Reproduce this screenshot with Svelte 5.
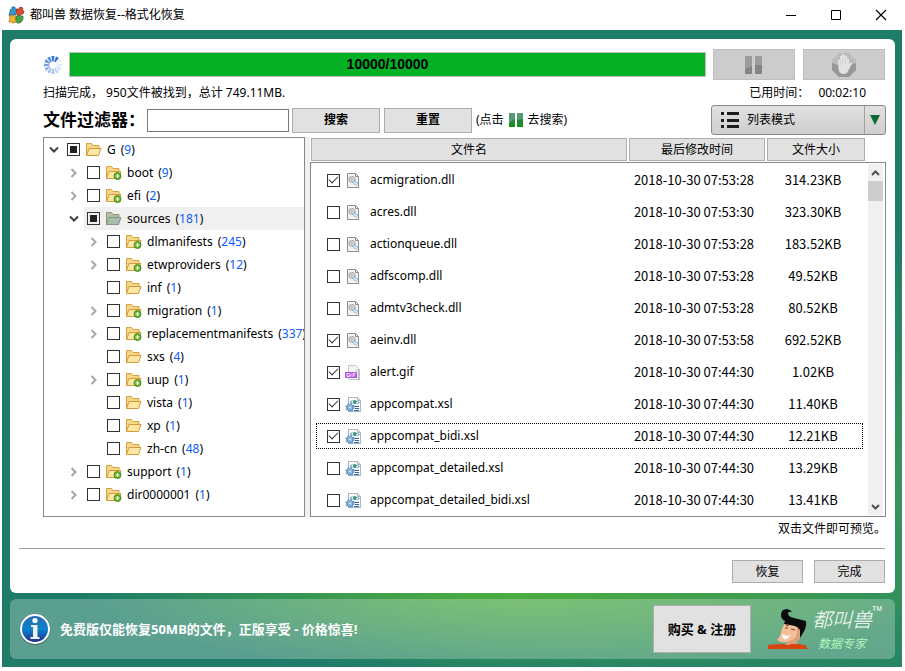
<script>
    let progress = 10000
    let total = 10000
    let keyword = ""
    let mode = "list"
    let selected = "sources"
    let focused = "appcompat_bidi.xsl"

    let tree = [
        {
            name: "G",
            count: 9,
            partial: true,
            children: [
                { name: "boot", count: 9, more: true },
                { name: "efi", count: 2, more: true },
                {
                    name: "sources",
                    count: 181,
                    partial: true,
                    children: [
                        { name: "dlmanifests", count: 245, more: true },
                        { name: "etwproviders", count: 12, more: true },
                        { name: "inf", count: 1 },
                        { name: "migration", count: 1, more: true },
                        { name: "replacementmanifests", count: 337, more: true },
                        { name: "sxs", count: 4 },
                        { name: "uup", count: 1, more: true },
                        { name: "vista", count: 1 },
                        { name: "xp", count: 1 },
                        { name: "zh-cn", count: 48 },
                    ],
                },
                { name: "support", count: 1, more: true },
                { name: "dir0000001", count: 1, more: true },
            ],
        },
    ]

    let files = [
        { name: "acmigration.dll", time: "2018-10-30 07:53:28", size: "314.23KB", checked: true },
        { name: "acres.dll", time: "2018-10-30 07:53:30", size: "323.30KB", checked: false },
        { name: "actionqueue.dll", time: "2018-10-30 07:53:28", size: "183.52KB", checked: false },
        { name: "adfscomp.dll", time: "2018-10-30 07:53:28", size: "49.52KB", checked: false },
        { name: "admtv3check.dll", time: "2018-10-30 07:53:28", size: "80.52KB", checked: false },
        { name: "aeinv.dll", time: "2018-10-30 07:53:58", size: "692.52KB", checked: true },
        { name: "alert.gif", time: "2018-10-30 07:44:30", size: "1.02KB", checked: true },
        { name: "appcompat.xsl", time: "2018-10-30 07:44:30", size: "11.40KB", checked: true },
        { name: "appcompat_bidi.xsl", time: "2018-10-30 07:44:30", size: "12.21KB", checked: true },
        { name: "appcompat_detailed.xsl", time: "2018-10-30 07:44:30", size: "13.29KB", checked: false },
        { name: "appcompat_detailed_bidi.xsl", time: "2018-10-30 07:44:30", size: "13.41KB", checked: false },
    ]

    // the spinner fades out anticlockwise, starting at one o'clock
    const spokes = [1, 0.1, 0.15, 0.2, 0.3, 0.4, 0.45, 0.55, 0.65, 0.75, 0.85, 0.95]
</script>

{#snippet folderIcon(node)}
    <svg width="17" height="16" viewBox="0 0 17 16">
        <path
            d="M1.5 13.5V1.5h5l1.5 2h6v3"
            fill={node.name === selected ? "#b4bd9d" : "#f6d68b"}
            stroke={node.name === selected ? "#8a9a7c" : "#d9a13c"}
        />
        <path
            d="M1.5 13.5L4 6.5h12l-2.500 7z"
            fill={node.name === selected ? "#a9bfae" : "#ffe7a3"}
            stroke={node.name === selected ? "#819882" : "#d39a3a"}
        />
        {#if node.more}
            <circle cx="12.500" cy="11" r="3.500" fill="#5fb022" stroke="#4c9318" />
            <path d="M10.500 11h4M12.500 9v4" stroke="#fff" stroke-width="1.200" />
        {/if}
    </svg>
{/snippet}

{#snippet fileIcon(name)}
    <svg width="17" height="17" viewBox="0 0 17 17">
        {#if name.endsWith(".dll")}
            <path d="M2.500 1.500h8l3 3v11h-11z" fill="#f4f4f4" stroke="#8d8d8d" />
            <path d="M10.500 1.500v3h3" fill="none" stroke="#8d8d8d" />
            <circle cx="7" cy="7.500" r="2.800" fill="none" stroke="#8b979c" stroke-width="1.600" stroke-dasharray="1.200 .6" />
            <circle cx="7" cy="7.500" r="1.300" fill="#a9b3b6" />
            <circle cx="10.500" cy="11.200" r="2" fill="#cfe6f4" stroke="#8db9d2" stroke-dasharray="1.200 .5" />
        {:else if name.endsWith(".gif")}
            <path d="M3.500 1.500h7l4 4v10h-11z" fill="#f4f4f4" stroke="#c4c4c4" />
            <path d="M10.500 1.500v4h4v10h-1.500v-9h-2.500z" fill="#bdbdbd" />
            <rect x="0" y="8" width="12" height="6" fill="#b458ea" />
            <path
                d="M4.500 9.500h-2.500v3h2.500v-1.500h-1M6 9.500v3M8 13v-3.500h2.500M8 11.200h2"
                fill="none"
                stroke="#fff"
                stroke-width=".8"
            />
        {:else}
            <path d="M3.500 1.500h9l3 3v11h-12z" fill="#fafcff" stroke="#adb3ba" />
            <path d="M12.500 1.500v3h3" fill="none" stroke="#adb3ba" />
            <path d="M7 4.500L5.500 6 7 7.500M12.500 5L14 6.500 12.500 8" fill="none" stroke="#3c61a8" />
            <circle cx="9.800" cy="6" r="2" fill="#2d9c84" />
            <path d="M9 10.500h5M10 12.500h4M9 14.500h5" stroke="#3a62ab" />
            <circle cx="5" cy="11.500" r="3" fill="#a4cdea" stroke="#5589b7" stroke-width="1.200" />
            <circle cx="5" cy="11.500" r="4" fill="none" stroke="#6b9bc4" stroke-width="1.400" stroke-dasharray="1.600 1.542" />
            <circle cx="5" cy="11.500" r="1.200" fill="#fff" stroke="#5589b7" stroke-width=".6" />
        {/if}
    </svg>
{/snippet}

{#snippet branch(nodes)}
    <ul>
        {#each nodes as node}
            <li>
                <div class="node">
                    {#if node.children || node.more}
                        <button class="toggle" aria-label={node.name} aria-expanded={!!node.children}>
                            <svg width="10" height="10" viewBox="0 0 10 10" fill="none" stroke-width="2">
                                {#if node.children}
                                    <path d="M1 2.500l4 4 4-4" stroke="#404040" />
                                {:else}
                                    <path d="M2.500 1l4 4-4 4" stroke="#a6a6a6" />
                                {/if}
                            </svg>
                        </button>
                    {:else}
                        <span class="toggle"></span>
                    {/if}
                    <label class:selected={node.name === selected}>
                        <input type="checkbox" indeterminate={node.partial} />
                        {@render folderIcon(node)}
                        <span>{node.name}</span>
                        <span class="count">(<span>{node.count}</span>)</span>
                    </label>
                </div>
                {#if node.children}
                    {@render branch(node.children)}
                {/if}
            </li>
        {/each}
    </ul>
{/snippet}

<header>
    <svg width="17" height="18" viewBox="0 0 17 18">
        <path d="M2 4l2-1 0-2 3 0 0 2 2 0v3l-1 1 0 2-3 0-1-1-1 2-2-1 1-3z" fill="#2e9bd0" stroke="#1b5c89" stroke-width=".7" />
        <path d="M9 3l2 0 1-2 3 1-1 2 2 1-1 3-2 0-1 2-3-1 0-2-1-1z" fill="#e24a2c" stroke="#902818" stroke-width=".7" />
        <path d="M1 9l3 1 2-1 2 3-1 2 1 2-3 1-2-1-2 0 1-4z" fill="#f5b62c" stroke="#a5700f" stroke-width=".7" />
        <path d="M8 10l2 0 1-1 2 1 2 0 0 3-1 2-2 2-3 0-1-3z" fill="#48a346" stroke="#2b6f2d" stroke-width=".7" />
    </svg>
    <h1>都叫兽 数据恢复--格式化恢复</h1>
    <button aria-label="最小化">
        <svg width="12" height="12" viewBox="0 0 12 12"><path d="M1 6.500h10" stroke="#000" /></svg>
    </button>
    <button aria-label="最大化">
        <svg width="12" height="12" viewBox="0 0 12 12"><path d="M1.500 1.500h9v9h-9z" fill="none" stroke="#000" /></svg>
    </button>
    <button aria-label="关闭">
        <svg width="12" height="12" viewBox="0 0 12 12"><path d="M1 1l10 10M11 1L1 11" stroke="#000" stroke-width="1.200" /></svg>
    </button>
</header>

<main>
    <div class="card">
        <div class="content">
            <div class="scan">
                <svg width="20" height="20" viewBox="0 0 20 20">
                    {#each spokes as opacity, i}
                        <path
                            d="M9.300 6.500L8.400 1h3.200l-.9 5.500z"
                            fill="#2f6fd6"
                            {opacity}
                            transform="rotate({i * 30 + 30} 10 10)"
                        />
                    {/each}
                </svg>
                <div class="progress" role="progressbar" aria-valuenow={progress} aria-valuemax={total}>
                    <div class="bar" style="width: {(progress / total) * 100}%"></div>
                    <span>{progress}/{total}</span>
                </div>
                <button class="control" disabled aria-label="暂停">
                    <svg width="18" height="20" viewBox="0 0 18 20">
                        <rect x="0" y="1" width="7" height="18" rx="1" fill="#9c9c9c" />
                        <rect x="10" y="1" width="7" height="18" rx="1" fill="#9c9c9c" />
                        <path d="M0 14q4-1 7-3v7q0 1-1 1H1q-1 0-1-1zM10 10l7 0v8q0 1-1 1h-5q-1 0-1-1z" fill="#848484" />
                    </svg>
                </button>
                <button class="control" disabled aria-label="停止">
                    <svg width="26" height="26" viewBox="0 0 26 26">
                        <path d="M8 1h10l7 7v10l-7 7H8l-7-7V8z" fill="#bdbdbd" />
                        <path d="M1 11q12 5 24 0v7l-7 7H8l-7-7z" fill="#989898" />
                        <path
                            d="M7 9q0-2 2-1V5q0-1.500 2-1V3q1-1.500 2.500 0v1q2-1 2.500 1v2q2-1 2 1l0 4q2-2 3-.5L17 19q-1 3-4 3-5 0-5.500-5z"
                            fill="#e2e2e2"
                        />
                        <path d="M9.500 8v5M12 5v7M14.500 6v6" stroke="#c9c9c9" stroke-width=".6" />
                    </svg>
                </button>
            </div>

            <div class="status">
                <span>扫描完成， 950文件被找到，总计 749.11MB.</span>
                <span class="elapsed">已用时间：</span>
                <span class="clock">00:02:10</span>
            </div>

            <div class="filter">
                <label for="keyword">文件过滤器：</label>
                <input id="keyword" type="text" bind:value={keyword} />
                <button>搜索</button>
                <button>重置</button>
                <span class="tip">
                    (点击
                    <svg width="14" height="16" viewBox="0 0 14 16">
                        <rect x="0" y="1" width="6" height="14" fill="#23843c" />
                        <rect x="8" y="1" width="6" height="14" fill="#23843c" />
                        <path d="M0 1h6v6l-6 4zM8 1h6v6l-6 1z" fill="#569c73" />
                        <path d="M0 12h6v3H0zM8 12h6v3H8z" fill="#17901c" />
                    </svg>
                    去搜索)
                </span>
                <div class="mode">
                    <svg width="18" height="18" viewBox="0 0 18 18" fill="#1c1c1c">
                        <path d="M0 1h3v3H0zM6 1h12v3H6zM0 8h3v3H0zM6 8h12v3H6zM0 14h3v3H0zM6 14h12v3H6z" />
                    </svg>
                    <select bind:value={mode} aria-label="列表模式">
                        <option value="list">列表模式</option>
                    </select>
                    <span class="arrow">
                        <svg width="10" height="10" viewBox="0 0 10 10"><path d="M0 0h10L5 10z" fill="#0b6b34" /></svg>
                    </span>
                </div>
            </div>

            <div class="panes">
                <nav>
                    {@render branch(tree)}
                </nav>
                <div class="files">
                    <table>
                        <thead>
                            <tr>
                                <th><button>文件名</button></th>
                                <th><button>最后修改时间</button></th>
                                <th><button>文件大小</button></th>
                            </tr>
                        </thead>
                        <tbody>
                            {#each files as file}
                                <tr class:focused={file.name === focused}>
                                    <td>
                                        <label>
                                            <input type="checkbox" bind:checked={file.checked} />
                                            {@render fileIcon(file.name)}
                                            {file.name}
                                        </label>
                                    </td>
                                    <td>{file.time}</td>
                                    <td>{file.size}</td>
                                </tr>
                            {/each}
                        </tbody>
                    </table>
                    <div class="scrollbar">
                        <svg width="15" height="17" viewBox="0 0 15 17"><path d="M4 11l3.500-3.500L11 11" fill="none" stroke="#505050" stroke-width="2" /></svg>
                        <div class="thumb"></div>
                        <svg width="15" height="17" viewBox="0 0 15 17"><path d="M4 7l3.500 3.500L11 7" fill="none" stroke="#505050" stroke-width="2" /></svg>
                    </div>
                </div>
            </div>
            <p>双击文件即可预览。</p>
        </div>

        <div class="actions">
            <button>恢复</button>
            <button>完成</button>
        </div>
    </div>

    <footer>
        <svg width="32" height="32" viewBox="0 0 32 32">
            <defs>
                <linearGradient id="info" x1="0" y1="0" x2="0" y2="1">
                    <stop offset="0" stop-color="#2a6cae" />
                    <stop offset=".5" stop-color="#0a83cc" />
                    <stop offset="1" stop-color="#1c2f86" />
                </linearGradient>
            </defs>
            <circle cx="16" cy="16.500" r="15.400" fill="#47706f" />
            <circle cx="16" cy="16" r="15" fill="#fff" />
            <circle cx="16" cy="16" r="13" fill="url(#info)" />
            <circle cx="16" cy="7.500" r="2.600" fill="#fff" />
            <path d="M12 12h6.500v12H20.500v2h-9v-2h2.500V14H12z" fill="#eef2f6" />
        </svg>
        <strong>免费版仅能恢复50MB的文件，正版享受 - 价格惊喜!</strong>
        <button>购买 &amp; 注册</button>
        <div class="brand">
            <svg width="40" height="42" viewBox="0 0 40 42">
                <path d="M17 14q-4 9-5 14l-3 4q4 3 9 2v5h11v-5q5-5 5-14l-3-7z" fill="#f4bf98" />
                <path d="M29 20q1 9-5 12l-6 2v4h11v-4q5-5 5-15z" fill="#dc9f78" />
                <path
                    d="M17 13q-4-2-4-6 0-6 6-6 4 1 5 3-3-1-4 1 0 4 6 5l12 3q1 6-3 12l-3 5v-8q-2-3-5-4l-11-2z"
                    fill="#0b0b0b"
                />
                <path d="M14 26q4 3 8 1-2 5-6 4-2-1-2-5z" fill="#fff" />
                <path d="M17 20l3 0M23 21l4 1M18 18l3-1" stroke="#744630" fill="none" />
                <path d="M0 41v-4q8-1 16-1 3 2 8 0 9 0 13 1l3 4z" fill="#d9430e" />
            </svg>
            <div class="words">
                <b>都叫兽</b>
                <i>数据专家</i>
            </div>
            <small>TM</small>
        </div>
    </footer>
</main>

<style>
    :global(body) {
        margin: 0;
        background: #fff;
        color: #000;
        font: 12px/16px "Noto Sans", "Noto Sans CJK SC", sans-serif;
    }
    button,
    input,
    select {
        box-sizing: border-box;
        margin: 0;
        color: inherit;
        font: inherit;
    }
    button {
        padding: 0;
        border: 1px solid #adadad;
        background: #e1e1e1;
    }
    svg {
        display: block;
        flex: none;
    }

    header {
        display: flex;
        align-items: center;
        height: 30px;
        padding: 0 2px 0 8px;
    }
    h1 {
        flex: 1;
        margin: 0 0 0 5px;
        font-size: 12px;
        font-weight: normal;
    }
    header button {
        display: flex;
        align-items: center;
        justify-content: center;
        width: 45px;
        height: 28px;
        border: 0;
        background: none;
    }

    main {
        margin: 0 3px 0 2px;
        padding: 9px 7px 8px 8px;
        background:
            radial-gradient(ellipse 48% 14% at 57% 87%, #50b03c, rgba(80, 176, 60, 0)),
            radial-gradient(ellipse 60% 42% at 88% 72%, rgba(66, 160, 84, 0.8), rgba(66, 160, 84, 0)),
            #1f7c69;
    }
    .card {
        padding: 10px 9px;
        border-radius: 6px;
        background: #fff;
    }
    .content {
        padding-left: 24px;
    }

    .scan {
        display: flex;
        align-items: center;
    }
    .progress {
        position: relative;
        flex: 1;
        height: 23px;
        margin: 0 7px 0 6px;
        border: 1px solid #bcbcbc;
        background: #e6e6e6;
    }
    .bar {
        height: 100%;
        background: #06b025;
    }
    .progress span {
        position: absolute;
        inset: 0;
        font: bold 14px/23px "Liberation Sans", sans-serif;
        text-align: center;
    }
    .control {
        display: flex;
        align-items: center;
        justify-content: center;
        width: 82px;
        height: 31px;
        border-color: #bfbfbf;
        background: #ccc;
    }
    .control:last-child {
        margin: 0 1px 0 8px;
    }

    .status {
        display: flex;
        align-items: center;
        height: 25px;
    }
    .elapsed {
        margin-left: auto;
    }
    .clock {
        margin: 0 20px 0 9px;
    }

    .filter {
        display: flex;
        align-items: center;
        height: 30px;
    }
    .filter label {
        width: 104px;
        font-size: 17px;
        font-weight: bold;
        white-space: nowrap;
    }
    .filter input {
        width: 142px;
        height: 23px;
        margin-right: 3px;
        border: 1px solid #7a7a7a;
    }
    .filter button {
        width: 88px;
        height: 25px;
        margin-right: 4px;
        font-weight: bold;
    }
    .tip {
        display: flex;
        align-items: center;
        gap: 5px;
    }
    .mode {
        display: flex;
        align-items: center;
        box-sizing: border-box;
        width: 175px;
        height: 30px;
        margin-left: auto;
        padding-left: 9px;
        border: 1px solid #8a8a8a;
        border-radius: 3px;
        background: linear-gradient(#e0e0e0, #cfcfcf);
    }
    .mode select {
        flex: 1;
        height: 28px;
        padding: 0 8px;
        border: 0;
        background: none;
        appearance: none;
    }
    .arrow {
        display: flex;
        align-items: center;
        justify-content: center;
        width: 20px;
        height: 28px;
        border-left: 1px solid #a0a0a0;
    }

    .panes {
        display: flex;
        margin-top: 2px;
        background: linear-gradient(#f0f0f0, #f0f0f0) 262px 0 / 5px 100% no-repeat;
    }
    nav {
        box-sizing: border-box;
        width: 262px;
        margin-right: 5px;
        border: 1px solid #828790;
        background: #fff;
        overflow: hidden;
    }
    ul {
        margin: 0;
        padding: 0;
        list-style: none;
    }
    ul :global(ul) {
        padding-left: 20px;
    }
    .node {
        display: flex;
        height: 23px;
        white-space: nowrap;
    }
    .toggle {
        display: flex;
        flex: none;
        align-items: center;
        justify-content: center;
        width: 20px;
        border: 0;
        background: none;
    }
    .node label {
        display: flex;
        flex: 1;
        align-items: center;
        padding-left: 3px;
    }
    .node label svg {
        margin: 0 5px;
    }
    .selected {
        background: #f0f0f0;
    }
    .count {
        margin-left: 5px;
    }
    .count span {
        color: #0a5cff;
    }

    input[type="checkbox"] {
        flex: none;
        width: 13px;
        height: 13px;
        border: 1px solid #333;
        background: #fff;
        appearance: none;
    }
    input[type="checkbox"]:indeterminate {
        background: #222 content-box;
        padding: 2px;
    }
    /* two sides of a rotated box make the tick */
    input[type="checkbox"]:checked::before {
        content: "";
        display: block;
        width: 8px;
        height: 4px;
        margin: 1px;
        border: solid #333;
        border-width: 0 0 1px 1px;
        transform: rotate(-45deg);
    }

    .files {
        display: grid;
        flex: 1;
    }
    table {
        grid-area: 1 / 1;
        display: block;
    }
    tr {
        display: grid;
        grid-template-columns: 1fr 136px 98px;
        column-gap: 2px;
        align-items: center;
    }
    thead {
        display: block;
        padding: 1px 21px 1px 1px;
    }
    th {
        padding: 0;
        font-weight: normal;
    }
    th button {
        display: block;
        width: 100%;
        height: 23px;
    }
    tbody {
        display: block;
        padding: 1px 22px 0 5px;
        border: 1px solid #828790;
    }
    tbody tr {
        box-sizing: border-box;
        height: 26px;
        margin: 3px 0 6px;
        padding-left: 10px;
        border: 1px solid transparent;
    }
    tbody tr:last-child {
        margin-bottom: 3px;
    }
    tbody tr.focused {
        border: 1px dotted #000;
    }
    td {
        padding: 0;
        font: 13px/16px "Noto Sans CJK SC", sans-serif;
        text-align: center;
    }
    td label {
        display: flex;
        align-items: center;
        font: 12px/16px "Noto Sans", sans-serif;
    }
    td label svg {
        margin: 0 8px 0 5px;
    }
    .scrollbar {
        grid-area: 1 / 1;
        justify-self: end;
        z-index: 1;
        display: flex;
        flex-direction: column;
        width: 15px;
        margin: 27px 3px 2px 0;
        background: #f0f0f0;
    }
    .thumb {
        height: 20px;
        margin-bottom: auto;
        background: #cdcdcd;
    }

    p {
        height: 31px;
        margin: 0;
        line-height: 24px;
        text-align: right;
    }
    .actions {
        display: flex;
        justify-content: flex-end;
        gap: 11px;
        margin-right: 1px;
        padding-top: 11px;
        border-top: 1px solid #a0a0a0;
    }
    .actions button {
        width: 71px;
        height: 23px;
    }

    footer {
        display: flex;
        align-items: center;
        height: 60px;
        margin-top: 6px;
        padding: 0 13px 0 9px;
        border-radius: 6px;
        background: rgba(255, 255, 255, 0.27);
    }
    footer strong {
        flex: 1;
        margin-left: 9px;
        color: #fff;
        font-size: 13px;
    }
    footer button {
        width: 98px;
        height: 48px;
        font-size: 13px;
        font-weight: bold;
    }
    .brand {
        display: flex;
        align-items: center;
        margin-left: 17px;
        color: #fff;
    }
    .words {
        display: flex;
        flex-direction: column;
        align-items: center;
        margin-left: 4px;
    }
    .words b {
        font-size: 20px;
        font-style: italic;
        font-weight: 300;
        line-height: 30px;
    }
    .words i {
        color: #b4f5bb;
        font-size: 12px;
        line-height: 18px;
    }
    small {
        align-self: flex-start;
        font: 7px/8px "Liberation Sans", sans-serif;
    }
</style>
